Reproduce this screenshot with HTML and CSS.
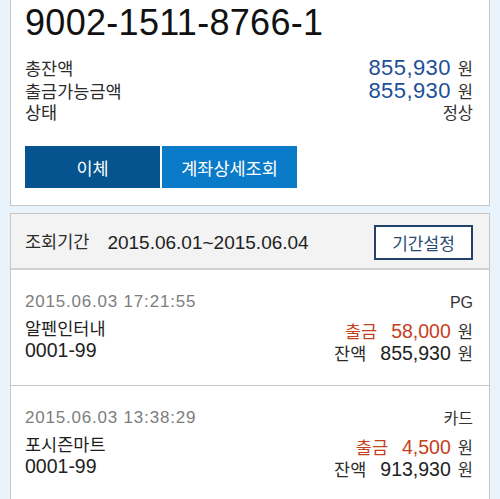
FILE: index.html
```html
<!DOCTYPE html>
<html lang="ko">
<head>
<meta charset="utf-8">
<title>계좌조회</title>
<link rel="stylesheet" href="styles.css">
</head>
<body>
<div class="page">
  <section class="card account">
    <div class="acct-no">9002-1511-8766-1</div>
    <div class="info">
      <div class="row"><span class="label">총잔액</span><span class="val"><span class="amt">855,930</span><span class="won">원</span></span></div>
      <div class="row"><span class="label">출금가능금액</span><span class="val"><span class="amt">855,930</span><span class="won">원</span></span></div>
      <div class="row"><span class="label">상태</span><span class="val status">정상</span></div>
    </div>
    <div class="btns">
      <button class="btn primary">이체</button>
      <button class="btn secondary">계좌상세조회</button>
    </div>
  </section>

  <section class="card list">
    <div class="period">
      <span class="plabel">조회기간</span>
      <span class="pdate">2015.06.01~2015.06.04</span>
      <button class="pbtn">기간설정</button>
    </div>

    <div class="tx">
      <div class="tx-left">
        <div class="date">2015.06.03 17:21:55</div>
        <div class="name">알펜인터내</div>
        <div class="code">0001-99</div>
      </div>
      <div class="tx-right">
        <div class="type">PG</div>
        <div class="line out"><span class="lab">출금</span><span class="num">58,000</span><span class="won">원</span></div>
        <div class="line bal"><span class="lab">잔액</span><span class="num">855,930</span><span class="won">원</span></div>
      </div>
    </div>

    <div class="tx">
      <div class="tx-left">
        <div class="date">2015.06.03 13:38:29</div>
        <div class="name">포시즌마트</div>
        <div class="code">0001-99</div>
      </div>
      <div class="tx-right">
        <div class="type">카드</div>
        <div class="line out"><span class="lab">출금</span><span class="num">4,500</span><span class="won">원</span></div>
        <div class="line bal"><span class="lab">잔액</span><span class="num">913,930</span><span class="won">원</span></div>
      </div>
    </div>
  </section>
</div>
</body>
</html>
```

FILE: styles.css
```css
html, body {
  margin: 0;
  padding: 0;
  height: 499px;
  overflow: hidden;
}
body {
  background: #e9f3fb;
  font-family: "Liberation Sans", "Noto Sans CJK KR", sans-serif;
  color: #222;
}
.page {
  padding: 0 10px;
}
.card {
  background: #fff;
  border: 1px solid #c6c6c6;
}
.account {
  border-top: none;
  padding: 1px 16px 17px 14px;
}
.acct-no {
  font-size: 36px;
  line-height: 44px;
  color: #111;
  letter-spacing: 0.3px;
}
.info {
  margin-top: 11px;
}
.row {
  display: flex;
  justify-content: space-between;
  align-items: baseline;
  height: 23px;
  line-height: 23px;
}
.label {
  font-size: 17.5px;
  color: #2c2c2c;
}
.val {
  display: flex;
  align-items: baseline;
  font-size: 16.5px;
  color: #333;
}
.amt {
  font-size: 22px;
  color: #1d4f97;
  letter-spacing: 0.4px;
}
.won {
  font-size: 16.5px;
  color: #333;
  margin-left: 7px;
}
.btns {
  display: flex;
  gap: 2px;
  margin-top: 21px;
}
.btn {
  width: 135px;
  height: 42px;
  border: none;
  padding: 0;
  color: #fff;
  font-family: "Liberation Sans", "Noto Sans CJK KR", sans-serif;
  font-size: 17.5px;
}
.primary {
  background: #05548f;
}
.secondary {
  background: #0a7bc8;
}
.list {
  margin-top: 7px;
}
.period {
  display: flex;
  align-items: center;
  background: #f3f3f3;
  padding: 11px 16px 8px 14px;
  border-bottom: 2px solid #d2d2d2;
}
.plabel {
  font-size: 17.5px;
  color: #2c2c2c;
  line-height: 35px;
}
.pdate {
  font-size: 19px;
  color: #222;
  margin-left: 18px;
}
.pbtn {
  margin-left: auto;
  width: 99px;
  height: 35px;
  background: #fff;
  border: 2px solid #23426a;
  padding: 0;
  color: #2a4a72;
  font-family: "Liberation Sans", "Noto Sans CJK KR", sans-serif;
  font-size: 17px;
}
.tx {
  display: flex;
  justify-content: space-between;
  padding: 19px 16px 21px 14px;
  border-bottom: 1px solid #c6c6c6;
}
.date {
  height: 25px;
  line-height: 25px;
  font-size: 17px;
  color: #7d7d7d;
  letter-spacing: 0.8px;
}
.name {
  height: 19px;
  padding-top: 6px;
  line-height: 19px;
  font-size: 17.5px;
  color: #1f1f1f;
}
.code {
  height: 25px;
  line-height: 22px;
  font-size: 19.5px;
  color: #222;
}
.tx-right {
  display: flex;
  flex-direction: column;
  align-items: flex-end;
}
.type {
  height: 25px;
  line-height: 27px;
  font-size: 16px;
  color: #333;
}
.line {
  display: flex;
  align-items: baseline;
  line-height: 22px;
}
.out {
  padding-top: 6px;
  height: 22px;
}
.bal {
  height: 22px;
}
.lab {
  font-size: 17.5px;
  color: #2c2c2c;
  margin-right: 14px;
}
.num {
  font-size: 19.5px;
  color: #222;
}
.out .lab,
.out .num {
  color: #c5411d;
}
```
